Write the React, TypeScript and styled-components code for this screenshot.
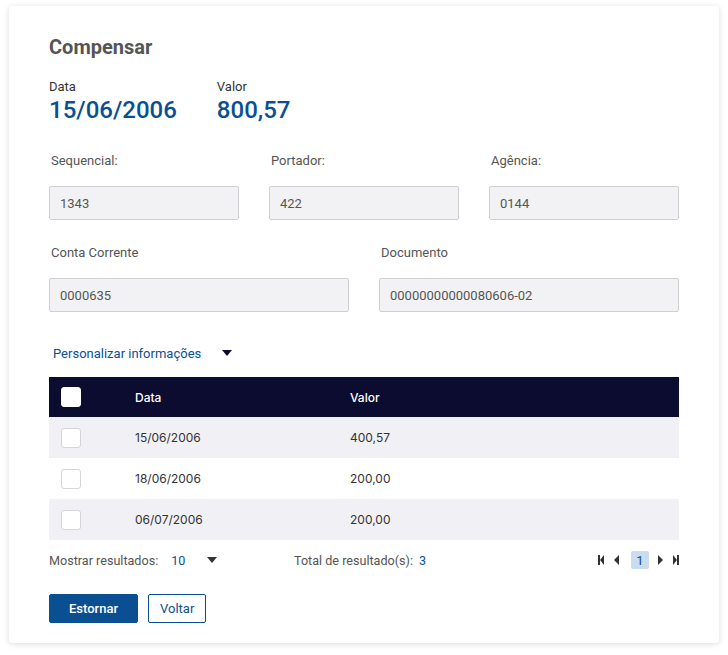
import React from "react";
import styled, { createGlobalStyle } from "styled-components";

const Global = createGlobalStyle`
  html, body { margin: 0; padding: 0; background: #ffffff; }
  body { font-family: Roboto, "Liberation Sans", sans-serif; }
  * { box-sizing: border-box; }
`;

const BLUE = "#0b4f93";

const Page = styled.div`
  padding: 6px 9px 12px 9px;
`;

const Card = styled.div`
  width: 710px;
  background: #fff;
  border-radius: 4px;
  box-shadow: 0 1px 6px rgba(0, 0, 0, 0.14);
  padding: 30px 40px 20px 40px;
  display: flex;
  flex-direction: column;
`;

const Title = styled.h1`
  margin: 0;
  font-size: 20px;
  font-weight: 700;
  color: #555;
  line-height: 22px;
`;

const Summary = styled.div`
  display: flex;
  gap: 40px;
  margin-top: 21px;
`;

const SummaryItem = styled.div`
  display: flex;
  flex-direction: column;
`;

const SummaryLabel = styled.span`
  font-size: 13px;
  color: #333;
  line-height: 16px;
`;

const SummaryValue = styled.span`
  font-size: 24px;
  font-weight: 500;
  color: ${BLUE};
  line-height: 30px;
`;

const FieldRow = styled.div<{ $cols: number; $top: number }>`
  display: grid;
  grid-template-columns: repeat(${(p) => p.$cols}, 1fr);
  column-gap: 30px;
  margin-top: ${(p) => p.$top}px;
`;

const Field = styled.div`
  display: flex;
  flex-direction: column;
`;

const Label = styled.label`
  font-size: 13px;
  color: #555;
  line-height: 16px;
  padding-left: 2px;
  margin-bottom: 17px;
`;

const Input = styled.div`
  height: 34px;
  background: #f2f2f4;
  border: 1px solid #cfd0d4;
  border-radius: 2px;
  font-size: 13px;
  color: #555;
  display: flex;
  align-items: center;
  padding-left: 10px;
`;

const Customize = styled.div`
  display: flex;
  align-items: center;
  margin-top: 33px;
  padding-left: 4px;
  height: 16px;
  font-size: 13px;
  color: ${BLUE};
  gap: 21px;
`;

const Caret = styled.span<{ $color?: string }>`
  width: 0;
  height: 0;
  border-left: 5px solid transparent;
  border-right: 5px solid transparent;
  border-top: 6px solid ${(p) => p.$color || "#0b0b2e"};
  display: inline-block;
`;

const Table = styled.div`
  margin-top: 16px;
  display: flex;
  flex-direction: column;
  font-family: Inter, Roboto, sans-serif;
`;

const HeadRow = styled.div`
  height: 40px;
  background: #0c0c30;
  display: grid;
  grid-template-columns: 86px 215px 1fr;
  align-items: center;
  color: #fff;
  font-size: 12px;
  font-weight: 500;
`;

const BodyRow = styled.div<{ $alt: boolean }>`
  height: 41px;
  background: ${(p) => (p.$alt ? "#f0f0f5" : "#ffffff")};
  display: grid;
  grid-template-columns: 86px 215px 1fr;
  align-items: center;
  color: #333;
  font-size: 12px;
`;

const CheckCell = styled.div`
  padding-left: 12px;
  display: flex;
  align-items: center;
`;

const Check = styled.span<{ $head?: boolean }>`
  width: 20px;
  height: 20px;
  border-radius: 3px;
  background: #fff;
  border: 1px solid ${(p) => (p.$head ? "#fff" : "#d4d4da")};
  display: inline-block;
`;

const Footer = styled.div`
  display: flex;
  align-items: center;
  margin-top: 10px;
  height: 20px;
  font-size: 12.6px;
  color: #555;
`;

const Group = styled.div<{ $w?: number }>`
  display: flex;
  align-items: center;
  width: ${(p) => (p.$w ? `${p.$w}px` : "auto")};
`;

const Num = styled.span<{ $ml: number }>`
  color: ${BLUE};
  margin-left: ${(p) => p.$ml}px;
`;

const DropCaret = styled(Caret)`
  margin-left: 22px;
`;

const Pager = styled.div`
  margin-left: auto;
  display: flex;
  align-items: center;
  gap: 10px;
`;

const PageBtn = styled.span`
  display: inline-flex;
  align-items: center;
  justify-content: center;
  width: 18px;
  height: 18px;
  margin: 0 -1px 0 2px;
  background: #c9dcf0;
  border-radius: 2px;
  color: ${BLUE};
  font-size: 13px;
`;

const Actions = styled.div`
  display: flex;
  gap: 10px;
  margin-top: 24px;
`;

const Button = styled.button<{ $primary?: boolean }>`
  height: 29px;
  padding: 0 ${(p) => (p.$primary ? 19 : 11)}px;
  font-family: Roboto, sans-serif;
  font-size: 13px;
  border-radius: 2px;
  border: 1px solid ${BLUE};
  background: ${(p) => (p.$primary ? BLUE : "#fff")};
  color: ${(p) => (p.$primary ? "#fff" : BLUE)};
  font-weight: ${(p) => (p.$primary ? 500 : 400)};
  cursor: pointer;
`;

const Nav = ({ dir, edge }: { dir: "l" | "r"; edge?: boolean }) => (
  <svg width={edge ? 6 : 5} height="10" viewBox={edge ? "0 0 6 10" : "0 0 5 10"}>
    {dir === "l" ? (
      edge ? (
        <>
          <rect x="0" y="0" width="2" height="10" fill="#333" />
          <polygon points="6,0 2,5 6,10" fill="#333" />
        </>
      ) : (
        <polygon points="5,0 0,5 5,10" fill="#333" />
      )
    ) : edge ? (
      <>
        <polygon points="0,0 4,5 0,10" fill="#333" />
        <rect x="4" y="0" width="2" height="10" fill="#333" />
      </>
    ) : (
      <polygon points="0,0 5,5 0,10" fill="#333" />
    )}
  </svg>
);

const rows = [
  { data: "15/06/2006", valor: "400,57" },
  { data: "18/06/2006", valor: "200,00" },
  { data: "06/07/2006", valor: "200,00" },
];

export default function App() {
  return (
    <>
      <Global />
      <Page>
        <Card>
          <Title>Compensar</Title>
          <Summary>
            <SummaryItem>
              <SummaryLabel>Data</SummaryLabel>
              <SummaryValue>15/06/2006</SummaryValue>
            </SummaryItem>
            <SummaryItem>
              <SummaryLabel>Valor</SummaryLabel>
              <SummaryValue>800,57</SummaryValue>
            </SummaryItem>
          </Summary>

          <FieldRow $cols={3} $top={28}>
            <Field>
              <Label>Sequencial:</Label>
              <Input>1343</Input>
            </Field>
            <Field>
              <Label>Portador:</Label>
              <Input>422</Input>
            </Field>
            <Field>
              <Label>Agência:</Label>
              <Input>0144</Input>
            </Field>
          </FieldRow>

          <FieldRow $cols={2} $top={25}>
            <Field>
              <Label>Conta Corrente</Label>
              <Input>0000635</Input>
            </Field>
            <Field>
              <Label>Documento</Label>
              <Input>00000000000080606-02</Input>
            </Field>
          </FieldRow>

          <Customize>
            <span>Personalizar informações</span>
            <Caret />
          </Customize>

          <Table>
            <HeadRow>
              <CheckCell>
                <Check $head />
              </CheckCell>
              <span>Data</span>
              <span>Valor</span>
            </HeadRow>
            {rows.map((r, i) => (
              <BodyRow key={i} $alt={i % 2 === 0}>
                <CheckCell>
                  <Check />
                </CheckCell>
                <span>{r.data}</span>
                <span>{r.valor}</span>
              </BodyRow>
            ))}
          </Table>

          <Footer>
            <Group $w={245}>
              <span>Mostrar resultados:</span>
              <Num $ml={13}>10</Num>
              <DropCaret $color="#333" />
            </Group>
            <Group>
              <span>Total de resultado(s):</span>
              <Num $ml={6}>3</Num>
            </Group>
            <Pager>
              <Nav dir="l" edge />
              <Nav dir="l" />
              <PageBtn>1</PageBtn>
              <Nav dir="r" />
              <Nav dir="r" edge />
            </Pager>
          </Footer>

          <Actions>
            <Button $primary>Estornar</Button>
            <Button>Voltar</Button>
          </Actions>
        </Card>
      </Page>
    </>
  );
}
